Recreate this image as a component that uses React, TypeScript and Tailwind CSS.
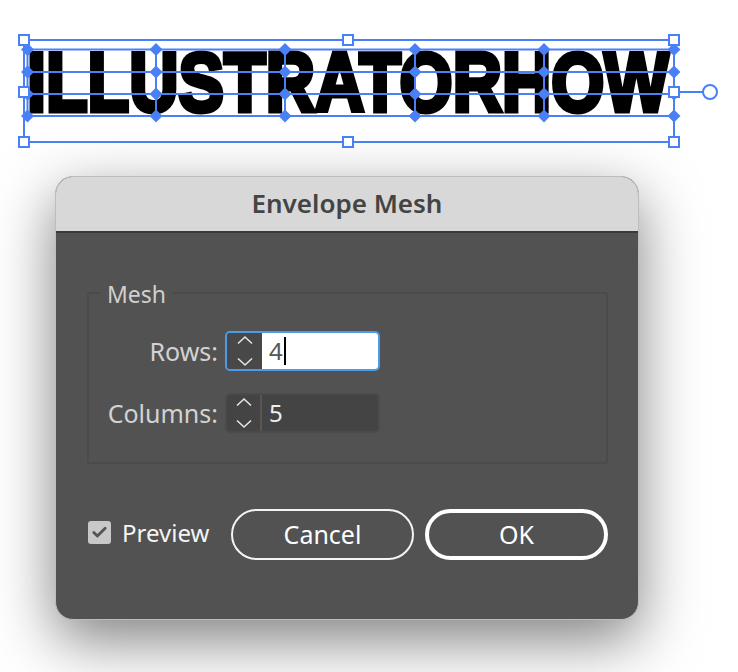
import { Check } from 'lucide-react';

const uiFont = 'font-["Noto_Sans",sans-serif]';
const meshX = [27.5, 156, 285, 415, 544, 674];
const meshY = [49.5, 72, 94, 116];
const handles = [
  [24, 40], [348, 40], [674, 40],
  [24, 92], [674, 92],
  [24, 142], [348, 142], [674, 142],
];

function SelectionOverlay() {
  const blue = '#4a80f5';
  return (
    <svg className="absolute inset-0" width={738} height={176} viewBox="0 0 738 176" fill="none">
      <rect x={24} y={40} width={650} height={102} stroke={blue} strokeWidth={2} />
      {meshY.map((y) => (
        <line key={y} x1={27} x2={674} y1={y} y2={y} stroke={blue} strokeWidth={2} />
      ))}
      {meshX.map((x) => (
        <line key={x} x1={x} x2={x} y1={49} y2={116} stroke={blue} strokeWidth={2} />
      ))}
      {meshX.flatMap((x) =>
        meshY.map((y) => (
          <polygon
            key={`${x}-${y}`}
            points={`${x},${y - 6.5} ${x + 6.5},${y} ${x},${y + 6.5} ${x - 6.5},${y}`}
            fill={blue}
          />
        )),
      )}
      <line x1={679} x2={703} y1={92} y2={92} stroke={blue} strokeWidth={2} />
      <circle cx={710} cy={92} r={7} fill="#fff" stroke={blue} strokeWidth={2} />
      {handles.map(([x, y]) => (
        <rect key={`${x}-${y}`} x={x - 5} y={y - 5} width={10} height={10} fill="#fff" stroke={blue} strokeWidth={2} />
      ))}
    </svg>
  );
}

function Stepper() {
  return (
    <svg width={20} height={34} viewBox="0 0 20 34" fill="none" stroke="#e4e4e4" strokeWidth={1.6}>
      <path d="M3 9.5 L10 3 L17 9.5" />
      <path d="M3 24.5 L10 31 L17 24.5" />
    </svg>
  );
}

function Spinner({ value, focused = false }: { value: string; focused?: boolean }) {
  return (
    <div
      className={`flex h-10 w-[155px] overflow-hidden rounded-[5px] border-2 ${
        focused ? 'border-[#4a9be8]' : 'border-[#4b4b4b]'
      }`}
    >
      <div className={`flex w-[35px] items-center justify-center ${focused ? 'bg-[#484848]' : 'bg-[#444444] border-r-2 border-[#575757]'}`}>
        <Stepper />
      </div>
      <div
        className={`flex flex-1 items-center pl-[7px] text-[24px] ${
          focused ? 'bg-white text-[#555555]' : 'bg-[#444444] text-[#eeeeee]'
        }`}
      >
        {value}
        {focused && <span className="ml-px h-7 w-0.5 bg-black" />}
      </div>
    </div>
  );
}

export default function App() {
  return (
    <div className="h-[672px] w-[738px] overflow-hidden bg-white">
      <div className="relative h-[176px]">
        <div className="absolute left-[24px] top-[32px] h-[100px] w-[654px] overflow-hidden pl-[3px]">
          <span className='block origin-top-left scale-x-[0.812] whitespace-nowrap font-["Liberation_Sans",sans-serif] text-[84px] font-bold leading-[100px] text-black [-webkit-text-stroke:5px_black]'>
            ILLUSTRATORHOW
          </span>
        </div>
        <SelectionOverlay />
      </div>

      <div
        className={`ml-[55px] flex h-[444px] w-[584px] flex-col overflow-hidden rounded-[18px] border border-[#bdbdbd] bg-[#525252] shadow-[0_20px_60px_rgba(0,0,0,0.5)] ${uiFont}`}
      >
        <div className="flex h-14 shrink-0 items-center justify-center border-b-2 border-[#3a3a3a] bg-[#d8d8d8] pb-0.5 text-[26px] font-semibold text-[#444444]">
          Envelope Mesh
        </div>

        <div className="flex flex-1 flex-col pl-[31px] pr-[30px] pt-[59px]">
          <div className="relative h-[172px] rounded-[3px] border-2 border-[#4b4b4b] pt-[37px]">
            <span className="absolute -top-[15px] left-[12px] bg-[#525252] px-1.5 text-[23px] leading-[30px] text-[#cfcfcf]">
              Mesh
            </span>
            <div className="grid grid-cols-[129px_auto] items-center justify-start gap-x-[7px] gap-y-[22px] text-right text-[25px] text-[#d2d2d2]">
              <span className="pt-0.5">Rows:</span>
              <Spinner value="4" focused />
              <span className="pt-0.5">Columns:</span>
              <Spinner value="5" />
            </div>
          </div>

          <div className="mt-[45px] flex items-center pl-px">
            <span className="mb-1 flex h-[23px] w-[23px] items-center justify-center rounded-[3px] bg-[#c8c8c8]">
              <Check size={17} strokeWidth={4} className="text-[#555555]" />
            </span>
            <span className="mb-1 ml-[11px] w-[87px] whitespace-nowrap text-[24px] text-[#f4f4f4]">Preview</span>
            <button type="button" className="ml-[22px] h-[51px] w-[183px] rounded-full border-2 border-[#f4f4f4] text-[25px] text-white">
              Cancel
            </button>
            <button type="button" className="ml-[11px] h-[51px] w-[183px] rounded-full border-4 border-white text-[25px] text-white">
              OK
            </button>
          </div>
        </div>
      </div>
    </div>
  );
}
